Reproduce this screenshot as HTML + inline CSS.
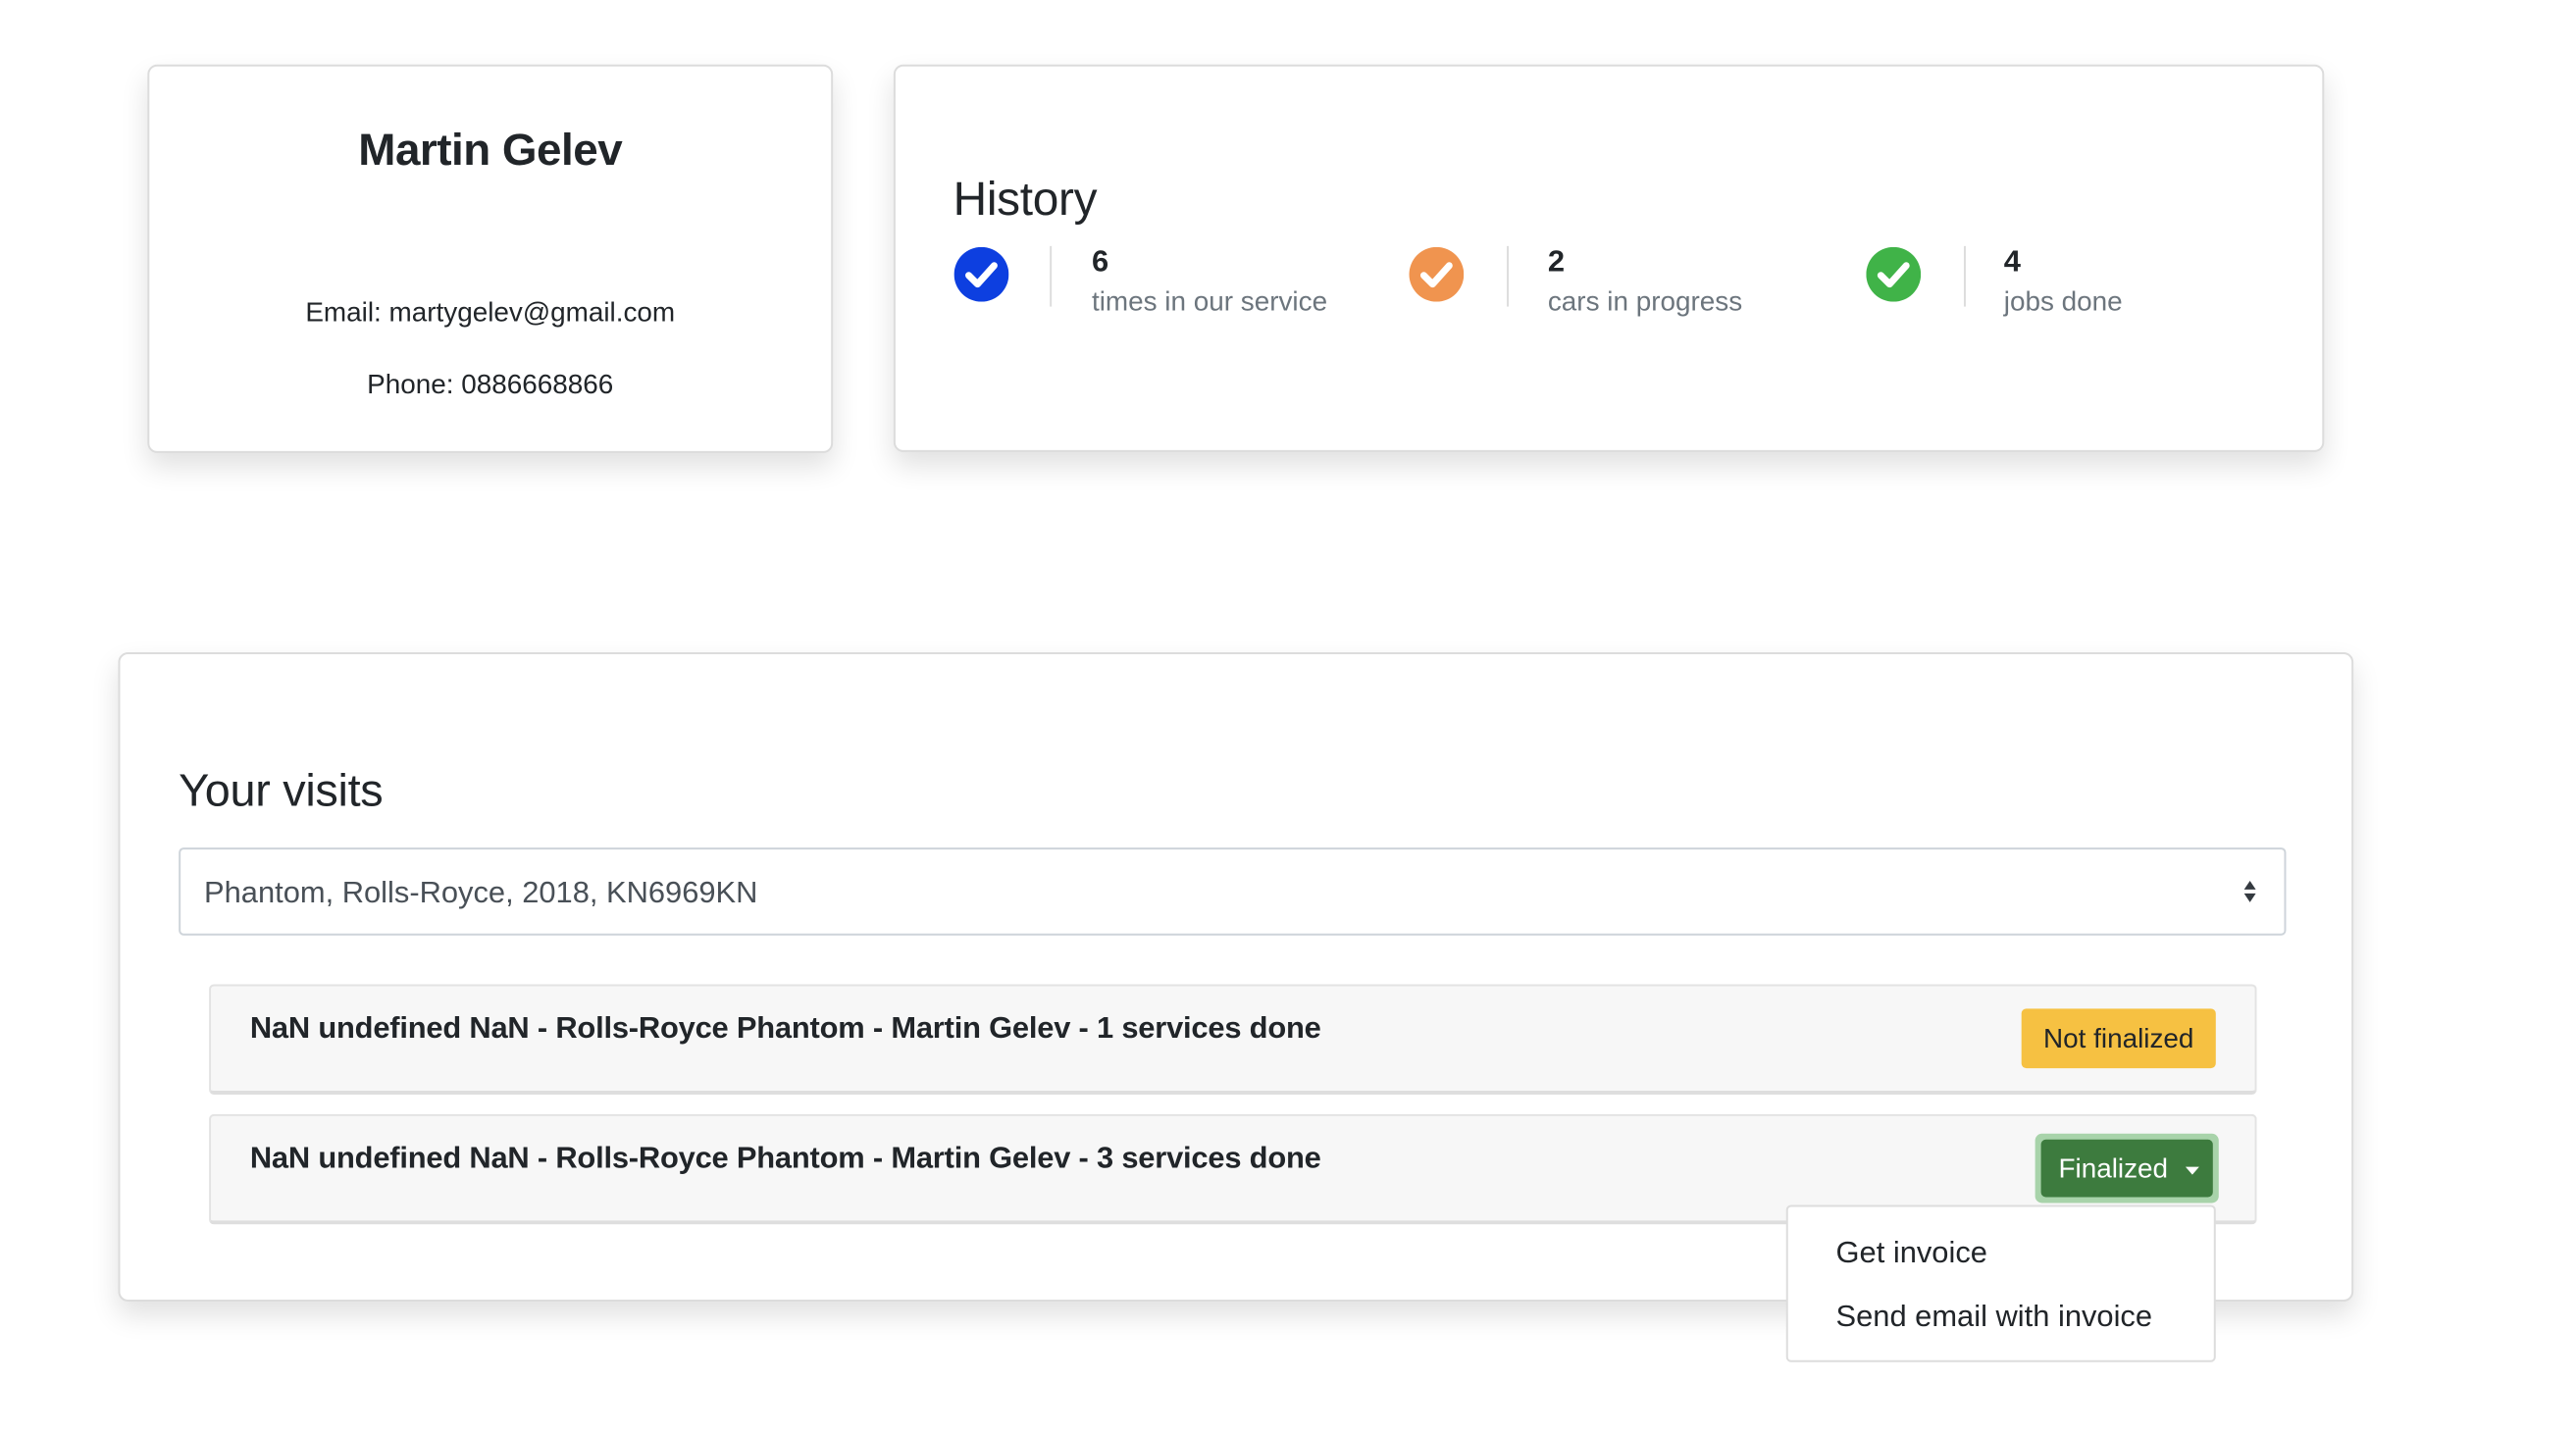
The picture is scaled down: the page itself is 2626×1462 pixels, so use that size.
<!DOCTYPE html>
<html><head><style>
*{box-sizing:border-box;margin:0;padding:0}
body{width:2626px;height:1462px;background:#fff;font-family:"Liberation Sans",sans-serif;color:#212529;position:relative;overflow:hidden}
#w{position:absolute;left:0;top:0;width:2626px;height:1462px;transform:scale(0.9955);transform-origin:0 0}
.card{position:absolute;background:#fff;border:2px solid #dcdcdc;border-radius:10px;box-shadow:0 14px 28px rgba(0,0,0,.12)}
.abs{position:absolute;white-space:nowrap}
.c{text-align:center}
.div{position:absolute;width:2px;height:62px;background:#ddd;top:252px}
.num{font-weight:bold;font-size:31px}
.lbl{font-size:28px;color:#6c757d}
.row{position:absolute;left:214px;width:2097px;background:#f7f7f7;border:2px solid #e3e3e3;border-bottom:4px solid #dedede;border-radius:5px}
.rt{font-size:31px;font-weight:bold;letter-spacing:-0.2px}
</style></head><body><div id="w">
<div class="card" style="left:151px;top:66px;width:702px;height:398px"></div>
<div class="abs c" style="left:151px;width:702px;top:126px;font-size:46px;font-weight:bold;letter-spacing:-0.5px">Martin Gelev</div>
<div class="abs c" style="left:151px;width:702px;top:304px;font-size:28px">Email: martygelev@gmail.com</div>
<div class="abs c" style="left:151px;width:702px;top:378px;font-size:28px">Phone: 0886668866</div>

<div class="card" style="left:915px;top:66px;width:1465px;height:397px"></div>
<div class="abs" style="left:976px;top:177px;font-size:48px;letter-spacing:-0.3px">History</div>
<svg class="abs" style="left:977px;top:253px" width="56" height="56" viewBox="0 0 56 56"><circle cx="28" cy="28" r="28" fill="#0d3fe0"/><path d="M15 29l9 9 17-19" stroke="#fff" stroke-width="7" fill="none" stroke-linecap="round" stroke-linejoin="round"/></svg>
<div class="div" style="left:1075px"></div>
<div class="abs num" style="left:1118px;top:250px">6</div>
<div class="abs lbl" style="left:1118px;top:293px">times in our service</div>
<svg class="abs" style="left:1443px;top:253px" width="56" height="56" viewBox="0 0 56 56"><circle cx="28" cy="28" r="28" fill="#f0944f"/><path d="M15 29l9 9 17-19" stroke="#fff" stroke-width="7" fill="none" stroke-linecap="round" stroke-linejoin="round"/></svg>
<div class="div" style="left:1543px"></div>
<div class="abs num" style="left:1585px;top:250px">2</div>
<div class="abs lbl" style="left:1585px;top:293px">cars in progress</div>
<svg class="abs" style="left:1911px;top:253px" width="56" height="56" viewBox="0 0 56 56"><circle cx="28" cy="28" r="28" fill="#40b348"/><path d="M15 29l9 9 17-19" stroke="#fff" stroke-width="7" fill="none" stroke-linecap="round" stroke-linejoin="round"/></svg>
<div class="div" style="left:2011px"></div>
<div class="abs num" style="left:2052px;top:250px">4</div>
<div class="abs lbl" style="left:2052px;top:293px">jobs done</div>

<div class="card" style="left:121px;top:668px;width:2289px;height:665px"></div>
<div class="abs" style="left:183px;top:781px;font-size:47px;letter-spacing:-0.3px">Your visits</div>
<div class="abs" style="left:183px;top:868px;width:2158px;height:90px;border:2px solid #ced4da;border-radius:5px"></div>
<div class="abs" style="left:209px;top:896px;font-size:31px;color:#495057">Phantom, Rolls-Royce, 2018, KN6969KN</div>
<svg class="abs" style="left:2297px;top:901px" width="14" height="24" viewBox="0 0 14 24"><path d="M7 1L13 10H1zM7 23L1 14h12z" fill="#343a40"/></svg>

<div class="row" style="top:1008px;height:113px"></div>
<div class="abs rt" style="left:256px;top:1035px">NaN undefined NaN - Rolls-Royce Phantom - Martin Gelev - 1 services done</div>
<div class="abs" style="left:2070px;top:1033px;width:199px;height:61px;background:#f6c142;border-radius:5px;font-size:28px;text-align:center;line-height:61px">Not finalized</div>

<div class="row" style="top:1141px;height:113px"></div>
<div class="abs rt" style="left:256px;top:1168px">NaN undefined NaN - Rolls-Royce Phantom - Martin Gelev - 3 services done</div>
<div class="abs" style="left:2084px;top:1161px;width:188px;height:71px;background:#a8d3aa;border-radius:7px"></div>
<div class="abs" style="left:2090px;top:1167px;width:176px;height:59px;background:#3d7b3e;border-radius:5px;color:#fff;font-size:28px;line-height:59px;padding-left:18px">Finalized <span style="display:inline-block;width:0;height:0;border-left:7px solid transparent;border-right:7px solid transparent;border-top:8px solid #fff;vertical-align:middle;margin-left:10px"></span></div>

<div class="abs" style="left:1829px;top:1234px;width:440px;height:161px;background:#fff;border:2px solid #ddd;border-radius:5px"></div>
<div class="abs" style="left:1880px;top:1265px;font-size:31px">Get invoice</div>
<div class="abs" style="left:1880px;top:1330px;font-size:31px">Send email with invoice</div>
</div></body></html>
